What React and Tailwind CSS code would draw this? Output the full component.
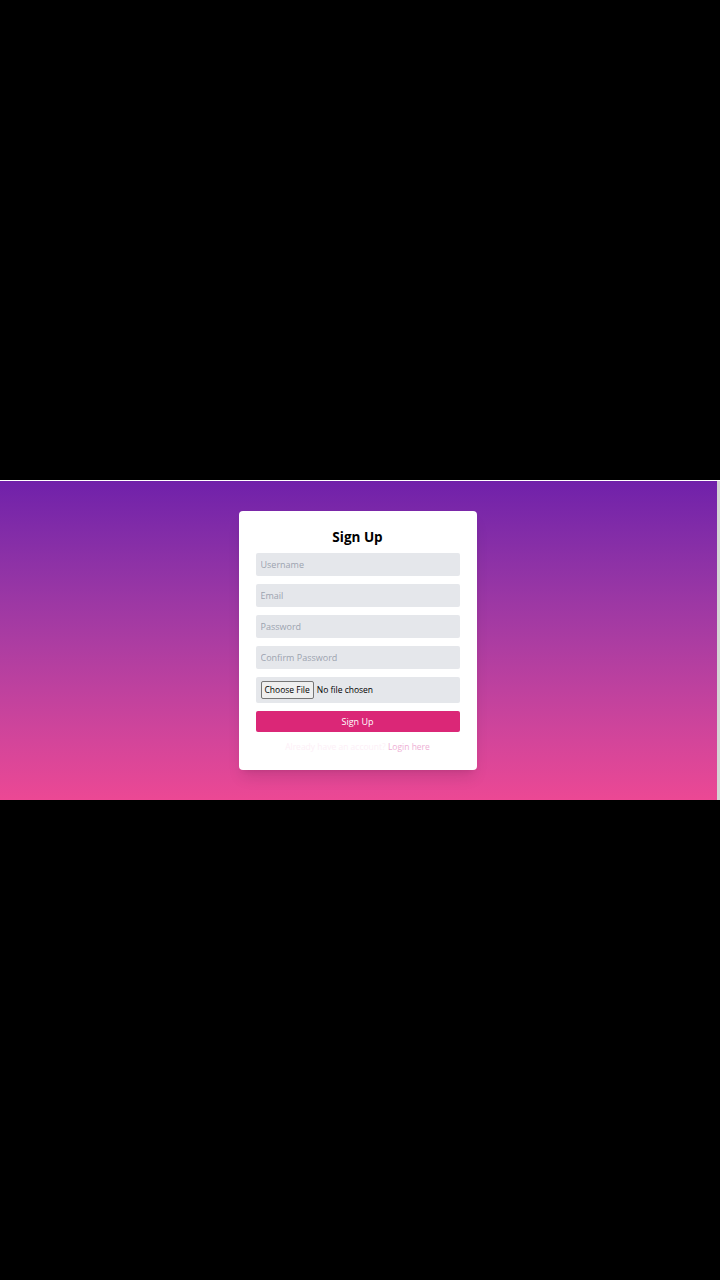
export default function App() {
  const fields = ["Username", "Email", "Password", "Confirm Password"];

  return (
    <div className="flex min-h-[1280px] flex-col bg-black font-['Open_Sans',sans-serif]">
      <div className="h-[480px]" />
      <div className="flex h-[320px] border-t border-white">
        <div className="flex flex-1 items-start justify-center bg-gradient-to-b from-[#7020aa] to-[#ec4894] pt-[30px]">
          <div className="ml-[-2px] w-[238px] rounded-[4px] bg-white px-[17px] pb-[16px] pt-[17px] shadow-lg">
            <h1 className="mb-[7px] text-center text-[13.5px] font-bold leading-[18px] text-black">Sign Up</h1>
            <form className="flex flex-col gap-[8px]">
              {fields.map((f) => (
                <input
                  key={f}
                  placeholder={f}
                  type={f.includes("Password") ? "password" : "text"}
                  className="h-[23px] rounded-[2px] bg-[#e5e7eb] px-[5px] text-[9px] outline-none placeholder:text-[#9ca3af]"
                />
              ))}
              <div className="flex h-[26px] items-center gap-[3px] rounded-[2px] bg-[#e5e7eb] px-[5px] text-[8.5px] text-black">
                <span className="flex h-[18px] items-center rounded-[2px] border border-[#767676] bg-[#efefef] px-[3px]">Choose File</span>
                <span>No file chosen</span>
              </div>
              <button type="button" className="h-[21px] rounded-[2px] bg-[#db2777] text-[9px] text-white">
                Sign Up
              </button>
            </form>
            <p className="mt-[9px] text-center text-[8.5px] text-[#fdf0f7]">
              Already have an account? <span className="text-[#eeb0d5]">Login here</span>
            </p>
          </div>
        </div>
        <div className="w-[3px] bg-[#d4d4d4]" />
      </div>
      <div className="flex-1" />
    </div>
  );
}
